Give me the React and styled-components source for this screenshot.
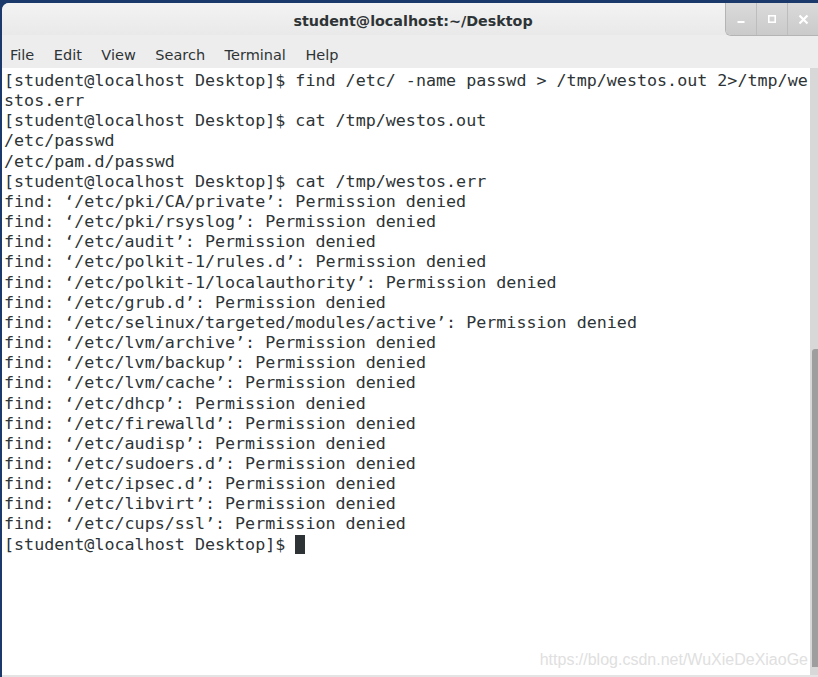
import React from 'react'
import styled, { createGlobalStyle } from 'styled-components'

const lines = [
  '[student@localhost Desktop]$ find /etc/ -name passwd > /tmp/westos.out 2>/tmp/we',
  'stos.err',
  '[student@localhost Desktop]$ cat /tmp/westos.out',
  '/etc/passwd',
  '/etc/pam.d/passwd',
  '[student@localhost Desktop]$ cat /tmp/westos.err',
  'find: ‘/etc/pki/CA/private’: Permission denied',
  'find: ‘/etc/pki/rsyslog’: Permission denied',
  'find: ‘/etc/audit’: Permission denied',
  'find: ‘/etc/polkit-1/rules.d’: Permission denied',
  'find: ‘/etc/polkit-1/localauthority’: Permission denied',
  'find: ‘/etc/grub.d’: Permission denied',
  'find: ‘/etc/selinux/targeted/modules/active’: Permission denied',
  'find: ‘/etc/lvm/archive’: Permission denied',
  'find: ‘/etc/lvm/backup’: Permission denied',
  'find: ‘/etc/lvm/cache’: Permission denied',
  'find: ‘/etc/dhcp’: Permission denied',
  'find: ‘/etc/firewalld’: Permission denied',
  'find: ‘/etc/audisp’: Permission denied',
  'find: ‘/etc/sudoers.d’: Permission denied',
  'find: ‘/etc/ipsec.d’: Permission denied',
  'find: ‘/etc/libvirt’: Permission denied',
  'find: ‘/etc/cups/ssl’: Permission denied',
]

const menus = ['File', 'Edit', 'View', 'Search', 'Terminal', 'Help']

const App = () => {
  return (
    <>
      <GlobalStyle />
      <S.Desktop>
        <S.Window>
          <S.TitleBar>
            <S.Title>student@localhost:~/Desktop</S.Title>
            <S.Controls>
              <S.Control>
                <svg width="10" height="10" viewBox="0 0 10 10">
                  <rect x="1.5" y="7" width="7" height="2" fill="#fff" />
                </svg>
              </S.Control>
              <S.Control>
                <svg width="10" height="10" viewBox="0 0 10 10">
                  <rect x="1.8" y="1.8" width="6.4" height="6.4" fill="none" stroke="#fff" strokeWidth="1.6" />
                </svg>
              </S.Control>
              <S.Control last>
                <svg width="11" height="11" viewBox="0 0 11 11">
                  <path d="M1.5 1.5 L9.5 9.5 M9.5 1.5 L1.5 9.5" stroke="#fff" strokeWidth="2.2" />
                </svg>
              </S.Control>
            </S.Controls>
          </S.TitleBar>
          <S.MenuBar>
            {menus.map((m) => (
              <S.MenuItem key={m}>{m}</S.MenuItem>
            ))}
          </S.MenuBar>
          <S.Body>
            <S.Screen>
              {lines.map((l, i) => (
                <S.Line key={i}>{l}</S.Line>
              ))}
              <S.Line>
                [student@localhost Desktop]$ <S.Cursor />
              </S.Line>
              <S.Watermark>https://blog.csdn.net/WuXieDeXiaoGe</S.Watermark>
            </S.Screen>
            <S.Scrollbar>
              <S.Thumb />
            </S.Scrollbar>
          </S.Body>
        </S.Window>
      </S.Desktop>
    </>
  )
}

export default App

const GlobalStyle = createGlobalStyle`
  html, body {
    margin: 0;
    padding: 0;
    background: #1b3a6b;
    overflow: hidden;
  }
`

const S = {
  Desktop: styled.div`
    width: 818px;
    height: 677px;
    padding: 3px 0 0 2px;
    box-sizing: border-box;
    background: #1b3a6b;
    overflow: hidden;
  `,
  Window: styled.div`
    display: flex;
    flex-direction: column;
    height: 100%;
    background: #ededed;
    border-top-left-radius: 7px;
    overflow: hidden;
  `,
  TitleBar: styled.div`
    position: relative;
    display: flex;
    align-items: center;
    justify-content: center;
    height: 32px;
    background: linear-gradient(#f3f3f3, #e9e9e9);
    flex-shrink: 0;
  `,
  Title: styled.div`
    font-family: 'DejaVu Sans', sans-serif;
    font-weight: bold;
    font-size: 14.3px;
    color: #2e3436;
    margin: 3px 0 0 6px;
  `,
  Controls: styled.div`
    position: absolute;
    top: 0;
    right: 0;
    display: flex;
    height: 32px;
    border-left: 1px solid #b4b4b4;
    border-bottom: 1px solid #b4b4b4;
    border-bottom-left-radius: 6px;
    overflow: hidden;
  `,
  Control: styled.div`
    display: flex;
    align-items: center;
    justify-content: center;
    width: 30px;
    background: linear-gradient(#dadada, #cacaca);
    border-right: ${(p) => (p.last ? 'none' : '1px solid #bdbdbd')};
  `,
  MenuBar: styled.div`
    display: flex;
    align-items: center;
    gap: 19.5px;
    height: 33px;
    padding-left: 8px;
    background: #ededed;
    flex-shrink: 0;
  `,
  MenuItem: styled.div`
    font-family: 'DejaVu Sans', sans-serif;
    font-size: 14.5px;
    color: #2e3436;
    padding-top: 7px;
  `,
  Body: styled.div`
    display: flex;
    flex: 1;
    background: #fff;
    border-bottom: 2px solid #e4e4e4;
  `,
  Screen: styled.div`
    position: relative;
    flex: 1;
    padding: 2px 0 0 2px;
    overflow: hidden;
  `,
  Line: styled.div`
    font-family: 'DejaVu Sans Mono', monospace;
    font-size: 16.7px;
    line-height: 20.17px;
    height: 20.17px;
    color: #2e3436;
    white-space: pre;
  `,
  Cursor: styled.span`
    display: inline-block;
    width: 10px;
    height: 19px;
    background: #2e3436;
    vertical-align: -4px;
  `,
  Watermark: styled.div`
    position: absolute;
    right: 2px;
    bottom: 6px;
    font-family: 'Liberation Sans', Arial, sans-serif;
    font-size: 16px;
    color: #e0e0e0;
  `,
  Scrollbar: styled.div`
    display: flex;
    flex-direction: column;
    justify-content: flex-end;
    width: 8px;
    background: #d8d8d8;
    padding: 0 0 8px 2px;
    box-sizing: border-box;
  `,
  Thumb: styled.div`
    height: 318px;
    background: #9e9e9e;
    border-top-left-radius: 3px;
  `,
}
